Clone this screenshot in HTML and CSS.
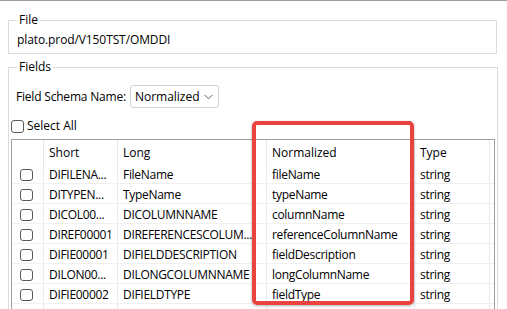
FILE: index.html
```html
<!DOCTYPE html>
<html lang="en">
<head>
    <meta charset="UTF-8">
    <title>Field Schema</title>
    <link rel="stylesheet" href="styles.css">
</head>
<body>
    <div class="topline"></div>

    <fieldset class="group file-group">
        <legend>File</legend>
        <div class="path">plato.prod/V150TST/OMDDI</div>
    </fieldset>

    <fieldset class="group fields-group">
        <legend>Fields</legend>

        <div class="schema-row">
            <span class="label">Field Schema Name:</span>
            <div class="combo">
                <span>Normalized</span>
                <svg width="9" height="6" viewBox="0 0 9 6"><polyline points="0.5,0.8 4.5,4.8 8.5,0.8" fill="none" stroke="#606060" stroke-width="1"/></svg>
            </div>
        </div>

        <div class="select-all">
            <span class="check"></span>
            <span>Select All</span>
        </div>

        <div class="grid">
            <div class="row head">
                <div class="cell"></div>
                <div class="cell">Short</div>
                <div class="cell">Long</div>
                <div class="cell">Normalized</div>
                <div class="cell">Type</div>
                <div class="cell"></div>
            </div>
            <div class="row">
                <div class="cell box"><span class="check"></span></div>
                <div class="cell">DIFILENA...</div>
                <div class="cell">FileName</div>
                <div class="cell">fileName</div>
                <div class="cell">string</div>
                <div class="cell"></div>
            </div>
            <div class="row">
                <div class="cell box"><span class="check"></span></div>
                <div class="cell">DITYPEN...</div>
                <div class="cell">TypeName</div>
                <div class="cell">typeName</div>
                <div class="cell">string</div>
                <div class="cell"></div>
            </div>
            <div class="row">
                <div class="cell box"><span class="check"></span></div>
                <div class="cell">DICOL00...</div>
                <div class="cell">DICOLUMNNAME</div>
                <div class="cell">columnName</div>
                <div class="cell">string</div>
                <div class="cell"></div>
            </div>
            <div class="row">
                <div class="cell box"><span class="check"></span></div>
                <div class="cell">DIREF00001</div>
                <div class="cell">DIREFERENCESCOLUM...</div>
                <div class="cell">referenceColumnName</div>
                <div class="cell">string</div>
                <div class="cell"></div>
            </div>
            <div class="row">
                <div class="cell box"><span class="check"></span></div>
                <div class="cell">DIFIE00001</div>
                <div class="cell">DIFIELDDESCRIPTION</div>
                <div class="cell">fieldDescription</div>
                <div class="cell">string</div>
                <div class="cell"></div>
            </div>
            <div class="row">
                <div class="cell box"><span class="check"></span></div>
                <div class="cell">DILON00...</div>
                <div class="cell">DILONGCOLUMNNAME</div>
                <div class="cell">longColumnName</div>
                <div class="cell">string</div>
                <div class="cell"></div>
            </div>
            <div class="row">
                <div class="cell box"><span class="check"></span></div>
                <div class="cell">DIFIE00002</div>
                <div class="cell">DIFIELDTYPE</div>
                <div class="cell">fieldType</div>
                <div class="cell">string</div>
                <div class="cell"></div>
            </div>
            <div class="row">
                <div class="cell box"><span class="check"></span></div>
                <div class="cell"></div>
                <div class="cell"></div>
                <div class="cell"></div>
                <div class="cell"></div>
                <div class="cell"></div>
            </div>
        </div>
    </fieldset>

    <!-- red callout drawn over the Normalized column -->
    <div class="highlight"></div>
</body>
</html>
```

FILE: styles.css
```css
* {
    margin: 0;
    padding: 0;
    box-sizing: border-box;
}

body {
    font-family: "Open Sans", "Noto Sans", sans-serif;
    font-size: 12px;
    line-height: 16px;
    color: #000;
    background-color: #fff;
    height: 309px;
    overflow: hidden;
    position: relative;
}

.topline {
    height: 1px;
    background-color: #a0a0a0;
}

/* Group boxes */
.group {
    border: 1px solid #dcdcdc;
    margin: 11px 10px 0 8px;
    padding: 0 2px;
}

.group legend {
    margin-left: 6px;
    padding: 0 2px;
    line-height: 16px;
}

.file-group .path {
    padding: 4px 0 5px 6px;
    letter-spacing: -0.1px;
}

.fields-group {
    margin-top: 5px;
}

/* Schema selector */
.schema-row {
    display: flex;
    align-items: center;
    margin-top: 10px;
    padding-left: 5px;
}

.schema-row .label {
    margin-right: 4px;
    letter-spacing: -0.2px;
}

.combo {
    display: flex;
    align-items: center;
    justify-content: space-between;
    width: 89px;
    height: 23px;
    padding: 0 5px 0 4px;
    border: 1px solid #d4d4d4;
    border-radius: 3px;
    background-color: #fff;
}

/* Checkboxes */
.check {
    display: inline-block;
    width: 13px;
    height: 13px;
    border: 1px solid #5a5a5a;
    border-radius: 3px;
    background-color: #fff;
}

.select-all {
    display: flex;
    align-items: center;
    gap: 3px;
    margin-top: 10px;
}

/* Data grid */
.grid {
    width: 484px;
    margin-top: 5px;
    border: 1px solid #a0a0a0;
    border-bottom: none;
}

.row {
    display: grid;
    grid-template-columns: 31px 74px 149px 148px 75px 1fr;
    height: 20px;
    border-bottom: 1px solid #f0f0f0;
}

.row.head {
    height: 24px;
    border-bottom: none;
}

.cell {
    display: flex;
    align-items: center;
    padding: 2px 0 0 5px;
    white-space: nowrap;
    overflow: hidden;
    letter-spacing: -0.3px;
    border-left: 1px solid #e3ebf5;
}

.cell:first-child {
    border-left: none;
}

.head .cell {
    border-left-color: #e8e8e8;
    letter-spacing: 0;
}

.cell.box {
    justify-content: center;
    padding-left: 0;
    padding-right: 2px;
}

.cell.box .check {
    height: 12px;
}

/* Callout */
.highlight {
    position: absolute;
    left: 252px;
    top: 121px;
    width: 162px;
    height: 184px;
    border: 4px solid #e8433f;
    border-radius: 5px;
    box-shadow: 0 1px 3px rgba(0, 0, 0, 0.3);
}
```
